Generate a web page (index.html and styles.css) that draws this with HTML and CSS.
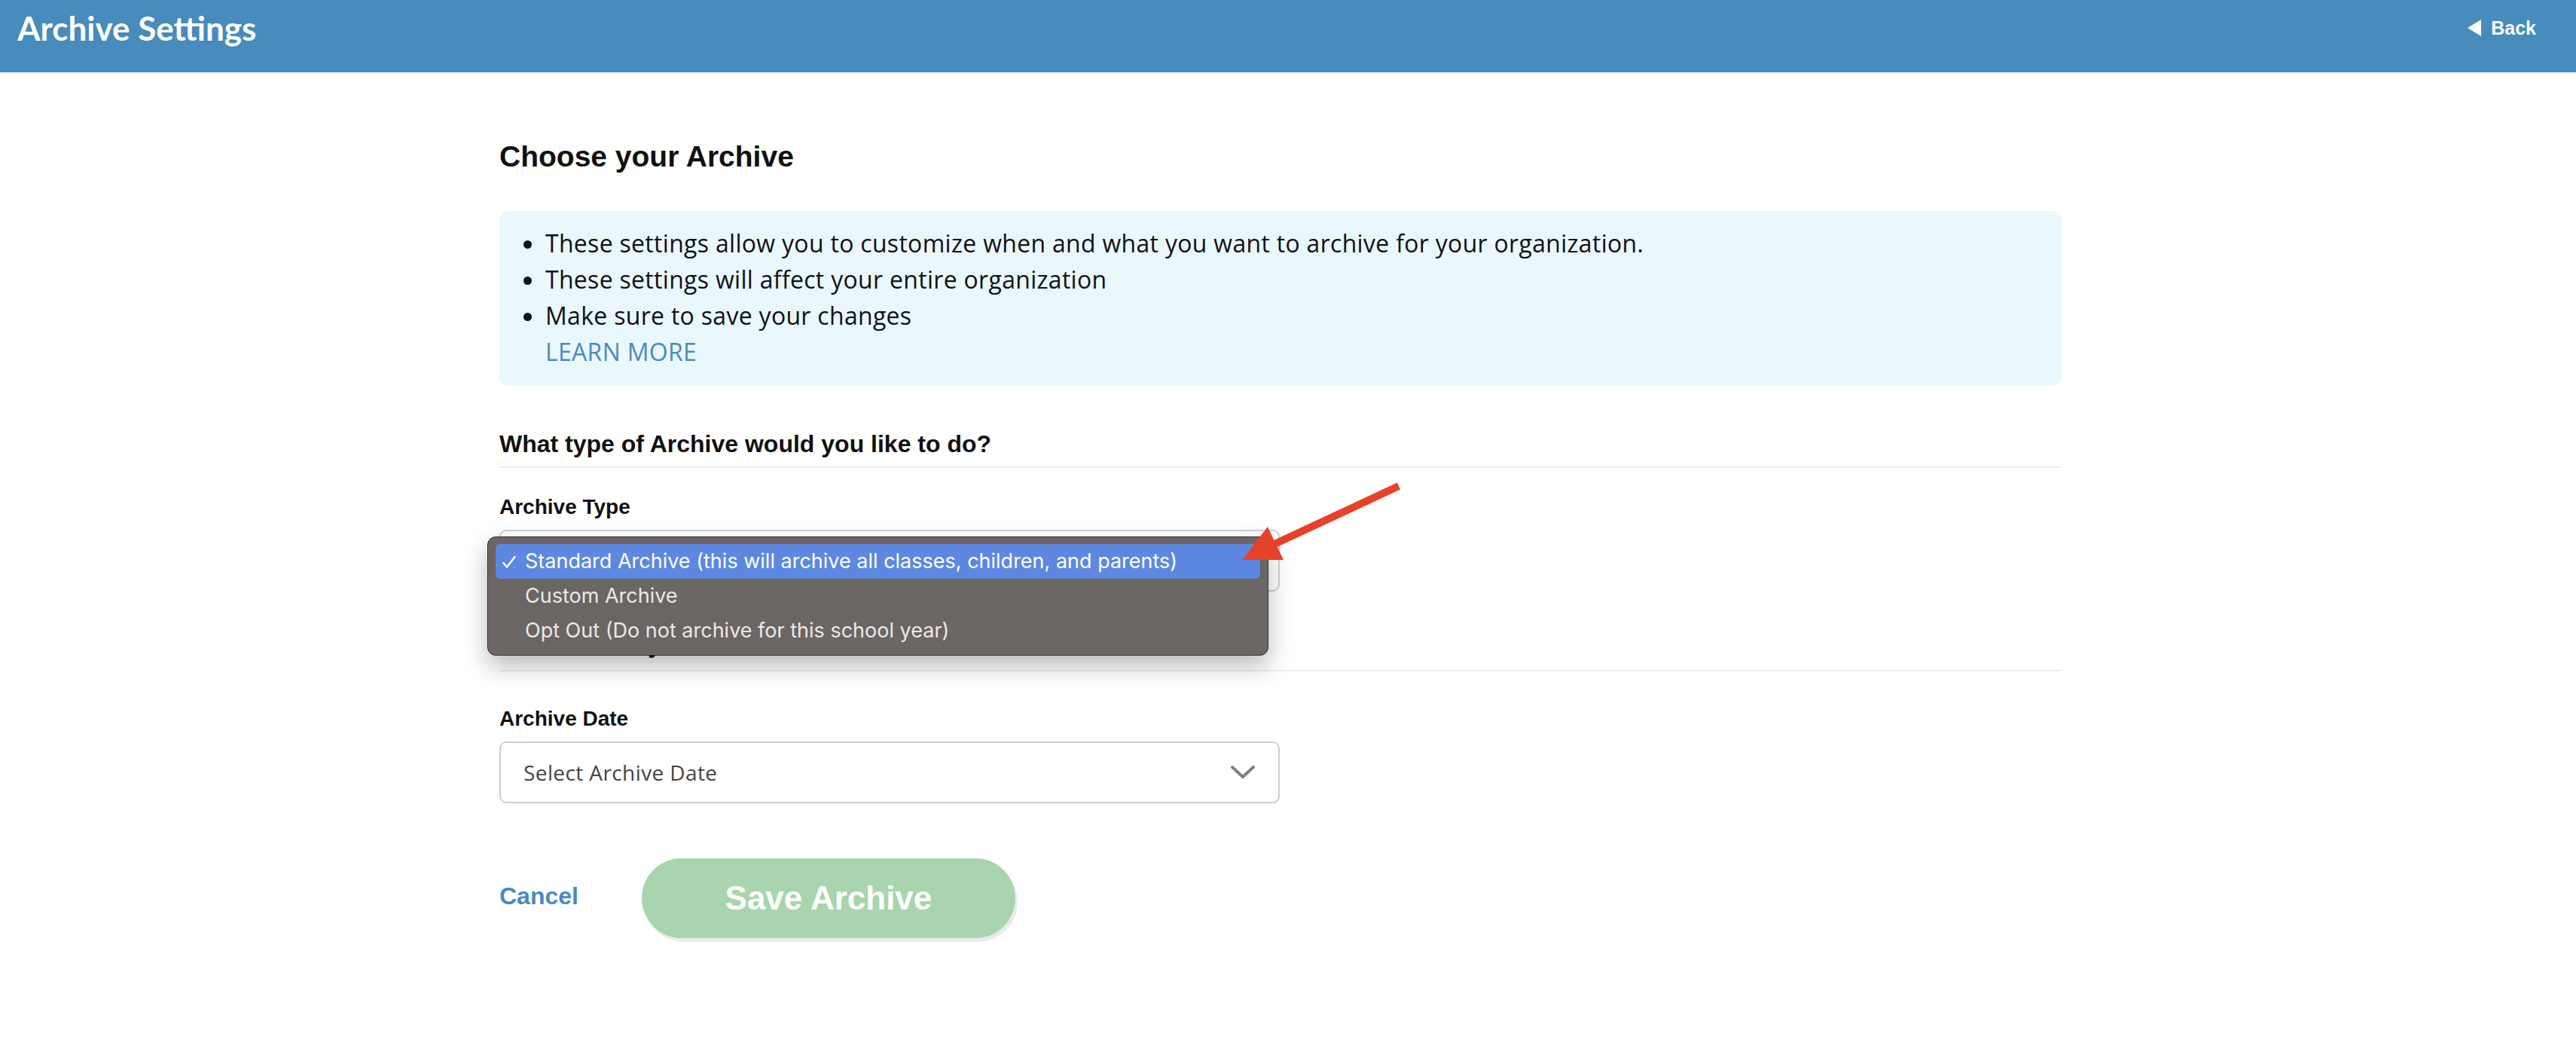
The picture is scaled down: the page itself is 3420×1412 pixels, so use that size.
FILE: index.html
```html
<!DOCTYPE html>
<html lang="en">
  <head>
    <title>Archive Settings</title>
    <meta charset="UTF-8" />
    <meta name="viewport" content="width=device-width, initial-scale=1" />
    <link rel="stylesheet" href="styles.css">
  </head>
  <body>
    <header class="topbar">
      <h1 class="topbar-title">Archive Settings</h1>
      <a class="back-link" href="#"><span class="back-arrow"></span>Back</a>
    </header>

    <main class="page">
      <h2 class="page-title">Choose your Archive</h2>

      <div class="info-box">
        <ul class="info-list">
          <li>These settings allow you to customize when and what you want to archive for your organization.</li>
          <li>These settings will affect your entire organization</li>
          <li>Make sure to save your changes</li>
        </ul>
        <a class="learn-more" href="#">LEARN MORE</a>
      </div>

      <section class="form-section">
        <h3 class="section-title">What type of Archive would you like to do?</h3>
        <label class="field-label">Archive Type</label>
        <div class="select-wrap">
          <div class="select-field">
            <span></span>
            <svg class="chevron" width="32" height="18" viewBox="0 0 32 18"><polyline points="2,2 16,15 30,2" fill="none" stroke="#808080" stroke-width="4" stroke-linecap="round" stroke-linejoin="round"/></svg>
          </div>
          <!-- open native popup -->
          <div class="select-menu">
            <div class="menu-item selected">
              <svg class="menu-check" width="18" height="16" viewBox="0 0 18 16"><polyline points="1.5,9 6,14.5 16.5,1" fill="none" stroke="#fff" stroke-width="2.4" stroke-linecap="round" stroke-linejoin="round"/></svg>
              Standard Archive (this will archive all classes, children, and parents)
            </div>
            <div class="menu-item">Custom Archive</div>
            <div class="menu-item">Opt Out (Do not archive for this school year)</div>
          </div>
        </div>
      </section>

      <section class="form-section second">
        <h3 class="section-title">When would you like to archive?</h3>
        <label class="field-label date-label">Archive Date</label>
        <div class="select-wrap">
          <div class="select-field">
            <span>Select Archive Date</span>
            <svg class="chevron" width="32" height="18" viewBox="0 0 32 18"><polyline points="2,2 16,15 30,2" fill="none" stroke="#808080" stroke-width="4" stroke-linecap="round" stroke-linejoin="round"/></svg>
          </div>
        </div>
      </section>

      <div class="actions">
        <a class="cancel-link" href="#">Cancel</a>
        <button class="save-btn">Save Archive</button>
      </div>
    </main>

    <svg class="callout-arrow" width="230" height="125" viewBox="0 0 230 125">
      <line x1="217" y1="15" x2="50" y2="93" stroke="#e8412a" stroke-width="10"/>
      <polygon points="9,113 43,69 64,113" fill="#e8412a"/>
    </svg>
  </body>
</html>
```

FILE: styles.css
```css
body {
  margin: 0;
  padding: 0;
  font-family: "Open Sans", "Liberation Sans", sans-serif;
  color: #111;
  background: #fff;
}
.topbar {
  display: flex;
  justify-content: space-between;
  align-items: center;
  box-sizing: border-box;
  height: 96px;
  padding: 0 53px 22px 23px;
  background-color: #488bbd;
  color: #fff;
}
.topbar-title {
  margin: 0;
  font-family: Lato, "Open Sans", sans-serif;
  font-weight: 700;
  font-size: 44px;
  line-height: 52px;
}
.back-link {
  display: flex;
  align-items: center;
  color: #fff;
  text-decoration: none;
  font-family: "Liberation Sans", Arial, sans-serif;
  font-weight: 700;
  font-size: 25px;
  line-height: 30px;
}
.back-arrow {
  width: 0;
  height: 0;
  margin-right: 13px;
  border-top: 11px solid transparent;
  border-bottom: 11px solid transparent;
  border-right: 18px solid #fff;
}
.page {
  width: 2074px;
  margin: 0 auto;
  padding-right: 20px;
  padding-bottom: 100px;
}
.page-title {
  margin: 88px 0 0;
  font-family: "Liberation Sans", Arial, sans-serif;
  font-weight: 700;
  font-size: 39px;
  line-height: 48px;
}
.info-box {
  box-sizing: border-box;
  height: 232px;
  margin-top: 48px;
  padding: 19px 0 21px 61px;
  border-radius: 12px;
  background-color: #eaf7fd;
  font-size: 32px;
  line-height: 48px;
  letter-spacing: 0.3px;
}
.info-list {
  margin: 0;
  padding: 0;
}
.learn-more {
  display: block;
  color: #4a8bbd;
  text-decoration: none;
}
.section-title {
  margin: 57px 0 0;
  padding-bottom: 10px;
  border-bottom: 2px solid #ededed;
  font-family: "Liberation Sans", Arial, sans-serif;
  font-weight: 700;
  font-size: 32px;
  line-height: 40px;
}
.second .section-title {
  margin-top: 50px;
  padding-bottom: 14px;
}
.field-label {
  display: block;
  margin-top: 35px;
  font-family: "Liberation Sans", Arial, sans-serif;
  font-weight: 700;
  font-size: 28px;
  line-height: 34px;
}
.date-label {
  margin-top: 46px;
}
.select-wrap {
  position: relative;
  width: 1036px;
  margin-top: 13px;
}
.select-field {
  display: flex;
  justify-content: space-between;
  align-items: center;
  box-sizing: border-box;
  height: 82px;
  padding: 0 31px 0 30px;
  border: 2px solid #cfcfcf;
  border-radius: 9px;
  font-size: 28px;
  letter-spacing: 0.4px;
  color: #444;
}
.select-menu {
  position: absolute;
  top: 9px;
  left: -16px;
  z-index: 10;
  box-sizing: border-box;
  width: 1037px;
  height: 158px;
  padding: 9px 10px;
  border: 1px solid #242424;
  border-radius: 11px;
  background-color: #6b6563;
  box-shadow: 0 14px 32px rgba(0, 0, 0, 0.28), inset 0 0 0 1px rgba(255, 255, 255, 0.08);
  font-family: Inter, "Liberation Sans", sans-serif;
  font-size: 27px;
  line-height: 46px;
  color: #ebe9e8;
}
.menu-item {
  position: relative;
  height: 46px;
  padding-left: 39px;
  border-radius: 6px;
  white-space: nowrap;
}
.menu-item.selected {
  background-color: #5d88e2;
  color: #fff;
}
.menu-check {
  position: absolute;
  left: 9px;
  top: 16px;
}
.actions {
  display: flex;
  align-items: center;
  gap: 84px;
  margin-top: 73px;
}
.cancel-link {
  color: #4a8bbd;
  text-decoration: none;
  font-family: "Liberation Sans", Arial, sans-serif;
  font-weight: 700;
  font-size: 32px;
  margin-top: -6px;
}
.save-btn {
  width: 496px;
  height: 106px;
  border: none;
  border-radius: 53px;
  background-color: #a8d5ae;
  box-shadow: 3px 5px 0 #ebebeb;
  color: #fff;
  font-family: "Liberation Sans", Arial, sans-serif;
  font-weight: 700;
  font-size: 44px;
}
.callout-arrow {
  position: absolute;
  left: 1640px;
  top: 630px;
  z-index: 20;
}
```
